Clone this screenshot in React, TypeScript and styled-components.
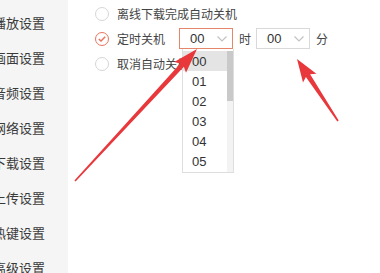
import React from 'react';
import styled, { createGlobalStyle } from 'styled-components';

const GlobalStyle = createGlobalStyle`
  html, body {
    margin: 0;
    padding: 0;
    background: #ffffff;
  }
  body {
    font-family: "Liberation Sans", "Noto Sans CJK SC", sans-serif;
  }
`;

const Page = styled.div`
  position: relative;
  display: flex;
  width: 380px;
  height: 273px;
  overflow: hidden;
  background: #ffffff;
`;

const Sidebar = styled.div`
  display: flex;
  flex-direction: column;
  width: 68px;
  flex-shrink: 0;
  padding: 5px 23px 0 0;
  box-sizing: border-box;
  background: #f5f5f5;
  overflow: hidden;
`;

const NavItem = styled.div`
  display: flex;
  justify-content: flex-end;
  align-items: center;
  height: 35px;
  flex-shrink: 0;
  font-family: "Noto Sans CJK SC", sans-serif;
  font-size: 13px;
  color: #3a3a3a;
  white-space: nowrap;
`;

const Main = styled.div`
  display: flex;
  flex-direction: column;
  padding: 1px 0 0 27px;
  flex: 1;
`;

const Row = styled.div`
  display: flex;
  align-items: center;
  height: 25px;
`;

const RadioCircle = styled.span<{ $checked?: boolean }>`
  display: flex;
  align-items: center;
  justify-content: center;
  width: 14px;
  height: 14px;
  box-sizing: border-box;
  border-radius: 50%;
  border: 1px solid ${({ $checked }) => ($checked ? '#e8735e' : '#d6d6d6')};
  background: #ffffff;
  margin-right: 8px;
`;

const Label = styled.span`
  font-family: "Noto Sans CJK SC", sans-serif;
  font-size: 12px;
  color: #444444;
  white-space: nowrap;
`;

const TimerLabel = styled(Label)`
  width: 48px;
  margin-right: 14px;
`;

const Unit = styled(Label)`
  margin: 0 5px 0 6px;
`;

const SelectWrap = styled.div`
  position: relative;
`;

const SelectBox = styled.div<{ $active?: boolean }>`
  display: flex;
  align-items: center;
  justify-content: space-between;
  width: 54px;
  height: 21px;
  box-sizing: border-box;
  padding: 0 5px 0 10px;
  border: 1px solid ${({ $active }) => ($active ? '#e3866c' : '#d9d9d9')};
  background: #ffffff;
  font-family: "Liberation Sans", sans-serif;
  font-size: 13px;
  color: #333333;
`;

const Dropdown = styled.div`
  position: absolute;
  top: 21px;
  left: 3px;
  width: 52px;
  height: 124px;
  box-sizing: border-box;
  border: 1px solid #dedede;
  border-top: none;
  background: #ffffff;
  display: flex;
  padding-top: 2px;
`;

const OptionList = styled.div`
  display: flex;
  flex-direction: column;
  flex: 1;
`;

const Option = styled.div<{ $selected?: boolean }>`
  display: flex;
  align-items: center;
  height: 20px;
  padding-left: 9px;
  background: ${({ $selected }) => ($selected ? '#e4e4e4' : 'transparent')};
  font-family: "Liberation Sans", sans-serif;
  font-size: 13px;
  color: #333333;
`;

const ScrollTrack = styled.div`
  width: 6px;
  background: #f3f3f3;
  display: flex;
  flex-direction: column;
`;

const ScrollThumb = styled.div`
  height: 50px;
  background: #c9c9c9;
`;

const Overlay = styled.svg`
  position: absolute;
  left: 0;
  top: 0;
  pointer-events: none;
`;

const Chevron = () => (
  <svg width="10" height="6" viewBox="0 0 10 6">
    <path d="M0.5 0.5 L5 5 L9.5 0.5" fill="none" stroke="#c2c2c2" strokeWidth="1.2" />
  </svg>
);

const Check = () => (
  <svg width="8" height="6" viewBox="0 0 8 6">
    <path d="M0.8 3 L3 5 L7.2 0.8" fill="none" stroke="#e8735e" strokeWidth="1.5" />
  </svg>
);

const navItems = ['播放设置', '画面设置', '音频设置', '网络设置', '下载设置', '上传设置', '热键设置', '高级设置'];
const hours = ['00', '01', '02', '03', '04', '05'];

export default function App() {
  return (
    <>
      <GlobalStyle />
      <Page>
        <Sidebar>
          {navItems.map((item) => (
            <NavItem key={item}>{item}</NavItem>
          ))}
        </Sidebar>

        <Main>
          <Row>
            <RadioCircle />
            <Label>离线下载完成自动关机</Label>
          </Row>
          <Row>
            <RadioCircle $checked>
              <Check />
            </RadioCircle>
            <TimerLabel>定时关机</TimerLabel>
            <SelectWrap>
              <SelectBox $active>
                00
                <Chevron />
              </SelectBox>
              <Dropdown>
                <OptionList>
                  {hours.map((h, i) => (
                    <Option key={h} $selected={i === 0}>
                      {h}
                    </Option>
                  ))}
                </OptionList>
                <ScrollTrack>
                  <ScrollThumb />
                </ScrollTrack>
              </Dropdown>
            </SelectWrap>
            <Unit>时</Unit>
            <SelectWrap>
              <SelectBox>
                00
                <Chevron />
              </SelectBox>
            </SelectWrap>
            <Unit>分</Unit>
          </Row>
          <Row>
            <RadioCircle />
            <Label>取消自动关机</Label>
          </Row>
        </Main>

        <Overlay width="380" height="273" viewBox="0 0 380 273">
          <polygon
            fill="#e8383b"
            points="74.4,180.5 180.3,63.4 174.2,61.9 197,49 186.0,72.7 183.9,66.8 75.6,181.5"
          />
          <polygon
            fill="#e8383b"
            points="337.3,121.4 305.9,77.1 303.0,82.6 297,59 316.4,73.8 310.1,74.3 338.7,120.6"
          />
        </Overlay>
      </Page>
    </>
  );
}
